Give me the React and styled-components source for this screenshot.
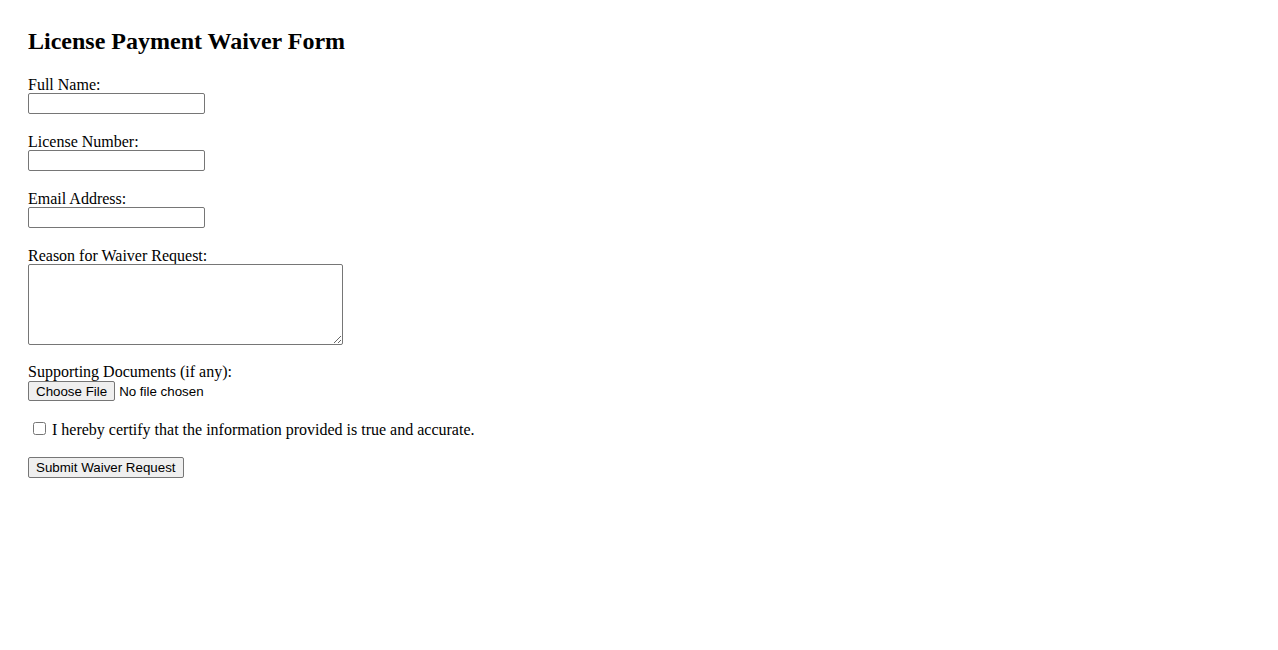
import React from "react";
import styled, { createGlobalStyle } from "styled-components";

const GlobalStyle = createGlobalStyle`
  body {
    margin: 8px;
    background: #ffffff;
    color: #000000;
    font-family: "Liberation Serif", "Times New Roman", serif;
  }
`;

const App = () => {
  return (
    <Page>
      <GlobalStyle />
      <Title>License Payment Waiver Form</Title>
      <Form onSubmit={(e) => e.preventDefault()}>
        <Field>
          <Label htmlFor="fullName">Full Name:</Label>
          <TextInput id="fullName" type="text" />
        </Field>
        <Field>
          <Label htmlFor="licenseNumber">License Number:</Label>
          <TextInput id="licenseNumber" type="text" />
        </Field>
        <Field>
          <Label htmlFor="email">Email Address:</Label>
          <TextInput id="email" type="email" />
        </Field>
        <Field $after={17}>
          <Label htmlFor="reason">Reason for Waiver Request:</Label>
          <TextArea id="reason" />
        </Field>
        <Field $after={18}>
          <Label htmlFor="docs">Supporting Documents (if any):</Label>
          <FileInput id="docs" type="file" />
        </Field>
        <CheckRow>
          <CheckBox type="checkbox" />
          <span>I hereby certify that the information provided is true and accurate.</span>
        </CheckRow>
        <SubmitButton type="submit">Submit Waiver Request</SubmitButton>
      </Form>
    </Page>
  );
};

const Page = styled.div`
  padding: 20px;
`;

const Title = styled.h2`
  margin: 0 0 21px;
  font-size: 24px;
  line-height: 26px;
  font-weight: bold;
`;

const Form = styled.form`
  display: flex;
  flex-direction: column;
  align-items: flex-start;
`;

const Field = styled.div`
  display: flex;
  flex-direction: column;
  align-items: flex-start;
  margin-bottom: ${(p) => p.$after || 18}px;
`;

const Label = styled.label`
  padding-top: 2px;
  font-size: 16px;
  line-height: 16px;
`;

const TextInput = styled.input`
  box-sizing: border-box;
  width: 177px;
  height: 21px;
  margin: 0;
  padding: 1px 2px;
  border: 1px solid #767676;
  border-radius: 2px;
  background: #ffffff;
  font-family: "Liberation Sans", Arial, sans-serif;
  font-size: 13.33px;
`;

const TextArea = styled.textarea`
  box-sizing: border-box;
  width: 315px;
  height: 81px;
  margin: 0;
  padding: 2px;
  border: 1px solid #767676;
  border-radius: 2px;
  font-family: "Liberation Mono", monospace;
  font-size: 13.33px;
`;

const FileInput = styled.input`
  margin: 1px 0 0;
  height: 21px;
  font-family: "Liberation Sans", Arial, sans-serif;
  font-size: 13.33px;
  color: #000000;

  &::file-selector-button {
    box-sizing: border-box;
    height: 20px;
    margin: 0 4px 0 0;
    padding: 1px 7px;
    border: 1px solid #767676;
    border-radius: 2px;
    background: #efefef;
    color: #000000;
    font-family: "Liberation Sans", Arial, sans-serif;
    font-size: 13.33px;
  }
`;

const CheckRow = styled.label`
  display: flex;
  align-items: center;
  height: 19px;
  margin-bottom: 18px;
  font-size: 16px;
  line-height: 18px;
`;

const CheckBox = styled.input`
  width: 13px;
  height: 13px;
  margin: -2px 6px 0 5px;
`;

const SubmitButton = styled.button`
  box-sizing: border-box;
  height: 21px;
  padding: 1px 7px;
  border: 1px solid #767676;
  border-radius: 2px;
  background: #efefef;
  color: #000000;
  font-family: "Liberation Sans", Arial, sans-serif;
  font-size: 13.33px;
  line-height: 16px;
`;

export default App;
